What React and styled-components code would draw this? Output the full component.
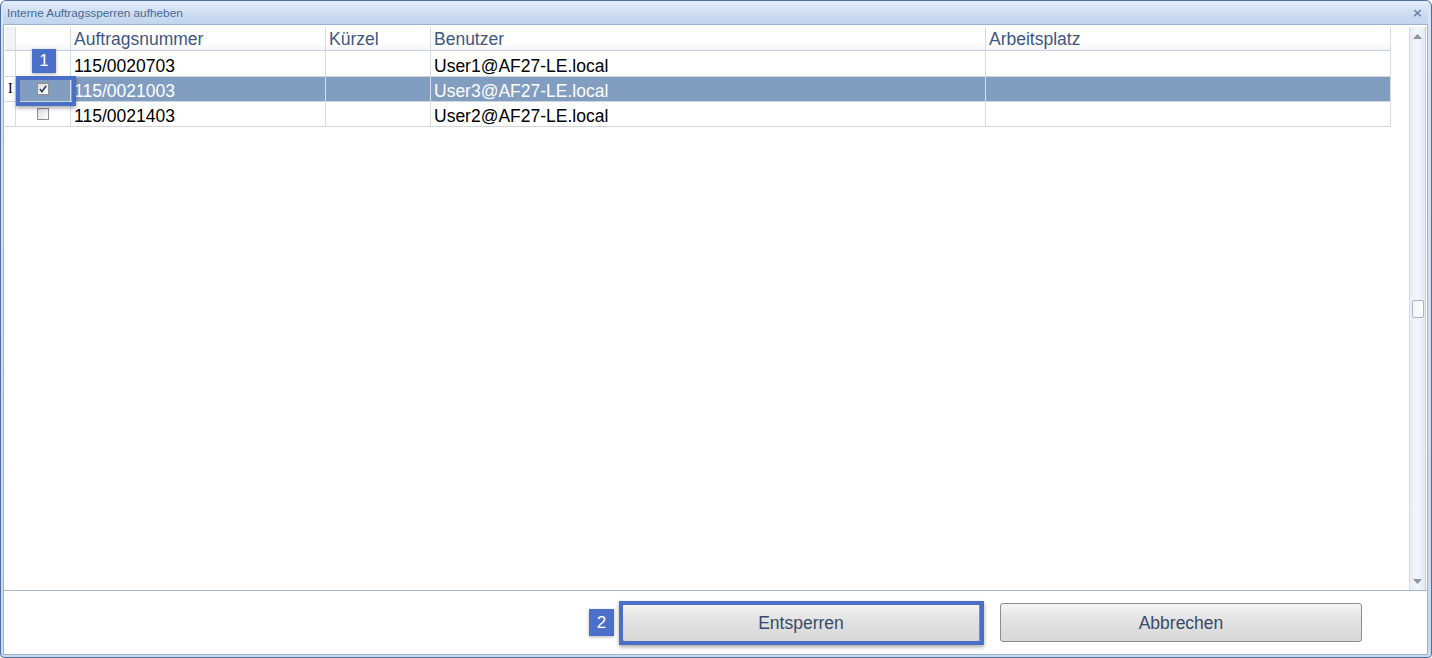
import React from "react";
import styled, { createGlobalStyle } from "styled-components";

const GlobalStyle = createGlobalStyle`
  html, body { margin: 0; padding: 0; background: #ffffff; }
  body { font-family: "Liberation Sans", Arial, sans-serif; }
`;

const columns = [
  { key: "ind", width: 11, label: "" },
  { key: "chk", width: 55, label: "" },
  { key: "nr", width: 255, label: "Auftragsnummer" },
  { key: "kz", width: 105, label: "Kürzel" },
  { key: "user", width: 555, label: "Benutzer" },
  { key: "ap", width: 405, label: "Arbeitsplatz" },
];

const rows = [
  { nr: "115/0020703", user: "User1@AF27-LE.local", checked: false },
  { nr: "115/0021003", user: "User3@AF27-LE.local", checked: true, selected: true },
  { nr: "115/0021403", user: "User2@AF27-LE.local", checked: false },
];

const gridTemplate = columns.map((c) => `${c.width}px`).join(" ");

const Window = styled.div`
  box-sizing: border-box;
  width: 1432px;
  height: 658px;
  display: flex;
  flex-direction: column;
  background: linear-gradient(#d6e3f4, #c9d9ee);
  border: 1px solid #4f6f9e;
  border-radius: 6px 6px 4px 4px;
  padding: 0 3px 2px 2px;
  overflow: hidden;
`;

const TitleBar = styled.div`
  height: 23px;
  display: flex;
  align-items: center;
  justify-content: space-between;
  padding: 0 4px 0 4px;
  background: linear-gradient(#e4edf9, #cbdcf1 60%, #c2d5ee);
`;

const Title = styled.span`
  font-family: "Liberation Sans", Arial, sans-serif;
  font-size: 11.8px;
  color: #4a6896;
`;

const Close = styled.span`
  font-family: "DejaVu Sans", sans-serif;
  font-size: 13px;
  color: #6d84a6;
  font-weight: bold;
  margin-right: 1px;
`;

const Content = styled.div`
  flex: 1;
  display: flex;
  flex-direction: column;
  background: #ffffff;
  border: 1px solid #9cb1d0;
`;

const GridArea = styled.div`
  flex: 1;
  display: flex;
  padding: 2px 1px 0 1px;
  border-bottom: 1px solid #a6b6cd;
`;

const Table = styled.div`
  flex: 1;
  align-self: flex-start;
  display: grid;
  grid-template-columns: ${gridTemplate};
`;

const HeaderCell = styled.div`
  box-sizing: border-box;
  height: 24px;
  display: flex;
  align-items: center;
  padding: 2px 0 0 3px;
  font-size: 17.5px;
  color: #3d5780;
  background: ${(p) => (p.$muted ? "#f1f3f6" : "linear-gradient(#ffffff, #ffffff 70%, #f2f4f7)")};
  border-right: 1px solid #d6dce5;
  border-bottom: 1px solid #c7cfdb;
  white-space: nowrap;
`;

const Cell = styled.div`
  box-sizing: border-box;
  position: relative;
  height: ${(p) => (p.$first ? 26 : 25)}px;
  display: flex;
  align-items: center;
  justify-content: ${(p) => (p.$center ? "center" : "flex-start")};
  padding: ${(p) => (p.$center ? "0" : "5px 0 0 3px")};
  font-size: 17.5px;
  color: ${(p) => (p.$selected ? "#ffffff" : "#000000")};
  background: ${(p) => (p.$selected ? "#819dc0" : "#ffffff")};
  border-right: 1px solid #d6dce5;
  border-bottom: 1px solid #d0d6df;
  white-space: nowrap;
`;

const Indicator = styled(Cell)`
  background: #ffffff;
  font-family: "Liberation Serif", serif;
  font-size: 14px;
  color: #000;
  padding: 0 0 0 3px;
`;

const Check = styled.span`
  box-sizing: border-box;
  width: 12px;
  height: 12px;
  border: 1px solid #8f8f8f;
  background: linear-gradient(135deg, #dcdcdc, #ffffff);
  display: flex;
  align-items: center;
  justify-content: center;
`;

const Highlight = styled.span`
  position: absolute;
  z-index: 2;
  box-sizing: border-box;
  border: 4px solid #4a6fc6;
  box-shadow: 0 2px 4px rgba(0, 0, 0, 0.35);
  pointer-events: none;
  left: ${(p) => p.$left}px;
  top: ${(p) => p.$top}px;
  width: ${(p) => p.$w}px;
  height: ${(p) => p.$h}px;
`;

const Badge = styled.span`
  position: absolute;
  z-index: 3;
  left: ${(p) => p.$left}px;
  top: ${(p) => p.$top}px;
  width: ${(p) => p.$w}px;
  height: ${(p) => p.$h}px;
  display: flex;
  align-items: center;
  justify-content: center;
  background: #4b70c9;
  color: #ffffff;
  font-size: 17px;
  box-shadow: 0 1px 3px rgba(0, 0, 0, 0.3);
`;

const Scrollbar = styled.div`
  width: 18px;
  margin-left: 18px;
  display: flex;
  flex-direction: column;
  background: linear-gradient(90deg, #e7edf6, #f4f7fb 50%, #e3eaf4);
  border-left: 1px solid #d3dcea;
  border-right: 1px solid #c7d3e5;
`;

const ScrollButton = styled.div`
  height: 18px;
  display: flex;
  align-items: center;
  justify-content: center;
`;

const Track = styled.div`
  flex: 1;
  display: flex;
  align-items: center;
  justify-content: center;
`;

const Thumb = styled.div`
  width: 10px;
  height: 16px;
  border: 1px solid #a9b5c6;
  border-radius: 2px;
  background: linear-gradient(90deg, #f4f6f9, #ffffff);
`;

const Footer = styled.div`
  box-sizing: border-box;
  height: 63px;
  display: flex;
  justify-content: flex-end;
  align-items: flex-start;
  gap: 20px;
  padding: 12px 65px 0 0;
`;

const ButtonWrap = styled.div`
  position: relative;
`;

const Button = styled.button`
  width: ${(p) => p.$w}px;
  height: 39px;
  font-family: "Liberation Sans", Arial, sans-serif;
  font-size: 17.5px;
  color: #3b4a69;
  background: linear-gradient(#f4f4f4, #e2e2e2 45%, #d8d8d8);
  border: 1px solid #8d8d8d;
  border-radius: 3px;
  padding: 2px 0 0;
  cursor: pointer;
`;

function Arrow({ up }) {
  return (
    <svg width="9" height="5" viewBox="0 0 9 5">
      <path d={up ? "M0 5 L4.5 0 L9 5 Z" : "M0 0 L4.5 5 L9 0 Z"} fill="#8a96a8" />
    </svg>
  );
}

function CheckBox({ checked }) {
  return (
    <Check>
      {checked && (
        <svg width="8" height="8" viewBox="0 0 8 8">
          <path d="M0.8 4 L3 6.6 L7.2 0.8" stroke="#2c3e66" strokeWidth="1.6" fill="none" />
        </svg>
      )}
    </Check>
  );
}

export default function App() {
  return (
    <>
      <GlobalStyle />
      <Window>
        <TitleBar>
          <Title>Interne Auftragssperren aufheben</Title>
          <Close>×</Close>
        </TitleBar>
        <Content>
          <GridArea>
            <Table>
              {columns.map((c, i) => (
                <HeaderCell key={c.key} $muted={i < 1}>
                  {c.label}
                </HeaderCell>
              ))}
              {rows.map((r, i) => {
                const first = i === 0;
                return (
                  <React.Fragment key={r.nr}>
                    <Indicator $first={first}>{r.selected ? "I" : ""}</Indicator>
                    <Cell $first={first} $center $selected={r.selected}>
                      <CheckBox checked={r.checked} />
                      {r.selected && (
                        <>
                          <Highlight $left={0} $top={-1} $w={60} $h={30} />
                          <Badge $left={16} $top={-28} $w={24} $h={24}>1</Badge>
                        </>
                      )}
                    </Cell>
                    <Cell $first={first} $selected={r.selected}>{r.nr}</Cell>
                    <Cell $first={first} $selected={r.selected}></Cell>
                    <Cell $first={first} $selected={r.selected}>{r.user}</Cell>
                    <Cell $first={first} $selected={r.selected}></Cell>
                  </React.Fragment>
                );
              })}
            </Table>
            <Scrollbar>
              <ScrollButton>
                <Arrow up />
              </ScrollButton>
              <Track>
                <Thumb />
              </Track>
              <ScrollButton>
                <Arrow />
              </ScrollButton>
            </Scrollbar>
          </GridArea>
          <Footer>
            <ButtonWrap>
              <Button $w={358}>Entsperren</Button>
              <Highlight $left={-3} $top={-2} $w={365} $h={44} />
              <Badge $left={-33} $top={6} $w={25} $h={27}>2</Badge>
            </ButtonWrap>
            <ButtonWrap>
              <Button $w={362}>Abbrechen</Button>
            </ButtonWrap>
          </Footer>
        </Content>
      </Window>
    </>
  );
}
